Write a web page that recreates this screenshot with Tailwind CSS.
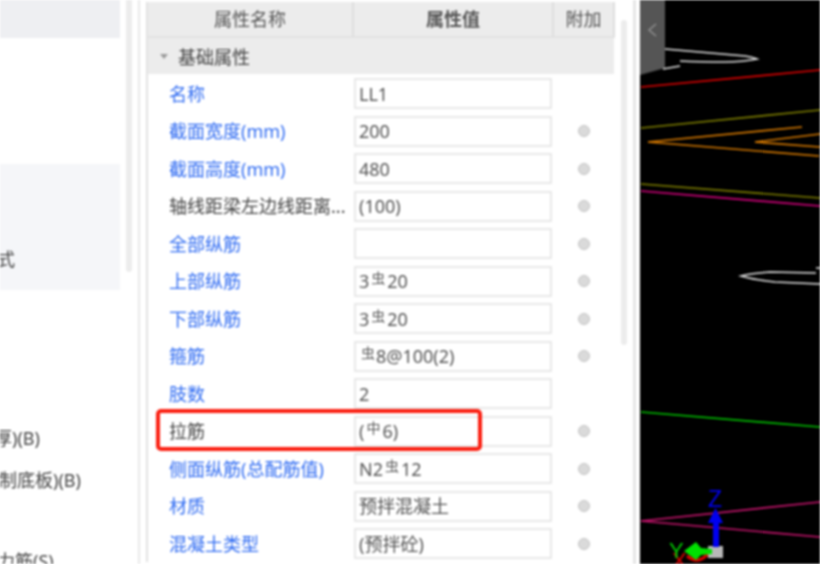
<!DOCTYPE html>
<html lang="zh">
<head>
<meta charset="utf-8">
<script src="https://cdn.jsdelivr.net/npm/@tailwindcss/browser@4"></script>
</head>
<body class="m-0 overflow-hidden bg-white">
<div class="relative flex h-[564px] w-[820px] overflow-hidden bg-white font-['Noto_Sans','Noto_Sans_CJK_SC',sans-serif] text-[18px] leading-[24px] text-[#444] blur-[0.8px]">

  <!-- left panel -->
  <aside class="relative h-full w-[140px] shrink-0 border-r-2 border-[#e8e8e8]">
    <div class="flex h-full w-[120px] flex-col">
      <div class="h-[38px] shrink-0 bg-[#eeeff2]"></div>
      <div class="h-[126px] shrink-0"></div>
      <div class="flex h-[126px] shrink-0 items-end bg-[#f5f6f9] pb-[19px]"><span class="-ml-[3px]">式</span></div>
      <div class="flex flex-1 flex-col items-start whitespace-nowrap">
        <span class="-ml-[6px] mt-[136px]">厚)(B)</span>
        <span class="-ml-[1px] mt-[18px]">制底板)(B)</span>
        <span class="-ml-[3px] mt-[57px]">力筋(S)</span>
      </div>
    </div>
    <div class="absolute left-[126px] top-0 h-[272px] w-[6px] rounded-b-[3px] bg-[#ececec]"></div>
  </aside>

  <!-- property panel -->
  <section class="relative h-full w-[500px] shrink-0 pl-[6px]">
    <div class="w-[469px] border-l-2 border-[#e2e2e2]">
      <div class="mt-[2px] flex h-[36px] border-b-2 border-[#e2e2e2] bg-[#ececec] text-[#555]">
        <div class="flex w-[206px] items-center justify-center border-r-2 border-[#dedede]">属性名称</div>
        <div class="flex w-[200px] items-center justify-center border-r-2 border-[#dedede] font-bold">属性值</div>
        <div class="flex flex-1 items-center justify-center border-r-2 border-[#dedede]">附加</div>
      </div>
      <div class="flex h-[36px] w-[466px] items-center bg-[#ececec] pt-[1px] text-[#444]">
        <span class="ml-[12px] mr-[10px] h-0 w-0 border-x-[4px] border-t-[5px] border-x-transparent border-t-[#999]"></span>基础属性
      </div>

      <div class="text-[#2f6bf2]">
        <div class="flex h-[37.5px] items-center pt-[2px]"><div class="w-[206px] truncate pl-[21px]">名称</div><div class="flex h-[31px] w-[198px] items-center border-2 border-[#e8e8e8] pl-[3px] text-[#555]">LL1</div><div class="flex-1"></div></div>
        <div class="flex h-[37.5px] items-center pt-[2px]"><div class="w-[206px] truncate pl-[21px]">截面宽度(mm)</div><div class="flex h-[31px] w-[198px] items-center border-2 border-[#e8e8e8] pl-[3px] text-[#555]">200</div><div class="flex flex-1 justify-center"><span class="size-[12px] rounded-full border border-[#c4c4c4] bg-[#dadada]"></span></div></div>
        <div class="flex h-[37.5px] items-center pt-[2px]"><div class="w-[206px] truncate pl-[21px]">截面高度(mm)</div><div class="flex h-[31px] w-[198px] items-center border-2 border-[#e8e8e8] pl-[3px] text-[#555]">480</div><div class="flex flex-1 justify-center"><span class="size-[12px] rounded-full border border-[#c4c4c4] bg-[#dadada]"></span></div></div>
        <div class="flex h-[37.5px] items-center pt-[2px]"><div class="w-[206px] whitespace-nowrap pl-[21px] text-[#444]">轴线距梁左边线距离...</div><div class="flex h-[31px] w-[198px] items-center border-2 border-[#e8e8e8] pl-[3px] text-[#555]">(100)</div><div class="flex flex-1 justify-center"><span class="size-[12px] rounded-full border border-[#c4c4c4] bg-[#dadada]"></span></div></div>
        <div class="flex h-[37.5px] items-center pt-[2px]"><div class="w-[206px] truncate pl-[21px]">全部纵筋</div><div class="flex h-[31px] w-[198px] items-center border-2 border-[#e8e8e8] pl-[3px] text-[#555]"></div><div class="flex flex-1 justify-center"><span class="size-[12px] rounded-full border border-[#c4c4c4] bg-[#dadada]"></span></div></div>
        <div class="flex h-[37.5px] items-center pt-[2px]"><div class="w-[206px] truncate pl-[21px]">上部纵筋</div><div class="flex h-[31px] w-[198px] items-center border-2 border-[#e8e8e8] pl-[3px] text-[#555]">3<span class="mx-[2px] -translate-y-[3px] text-[14px]">虫</span>20</div><div class="flex flex-1 justify-center"><span class="size-[12px] rounded-full border border-[#c4c4c4] bg-[#dadada]"></span></div></div>
        <div class="flex h-[37.5px] items-center pt-[2px]"><div class="w-[206px] truncate pl-[21px]">下部纵筋</div><div class="flex h-[31px] w-[198px] items-center border-2 border-[#e8e8e8] pl-[3px] text-[#555]">3<span class="mx-[2px] -translate-y-[3px] text-[14px]">虫</span>20</div><div class="flex flex-1 justify-center"><span class="size-[12px] rounded-full border border-[#c4c4c4] bg-[#dadada]"></span></div></div>
        <div class="flex h-[37.5px] items-center pt-[2px]"><div class="w-[206px] truncate pl-[21px]">箍筋</div><div class="flex h-[31px] w-[198px] items-center border-2 border-[#e8e8e8] pl-[3px] text-[#555]"><span class="ml-[2px] mr-[1px] -translate-y-[3px] text-[14px]">虫</span>8@100(2)</div><div class="flex flex-1 justify-center"><span class="size-[12px] rounded-full border border-[#c4c4c4] bg-[#dadada]"></span></div></div>
        <div class="flex h-[37.5px] items-center pt-[2px]"><div class="w-[206px] truncate pl-[21px]">肢数</div><div class="flex h-[31px] w-[198px] items-center border-2 border-[#e8e8e8] pl-[3px] text-[#555]">2</div><div class="flex-1"></div></div>
        <div class="flex h-[37.5px] items-center pt-[2px]"><div class="w-[206px] truncate pl-[21px] text-[#444]">拉筋</div><div class="flex h-[31px] w-[198px] items-center border-2 border-[#e8e8e8] pl-[3px] text-[#555]">(<span class="mx-[2px] -translate-y-[3px] text-[14px]">中</span>6)</div><div class="flex flex-1 justify-center"><span class="size-[12px] rounded-full border border-[#c4c4c4] bg-[#dadada]"></span></div></div>
        <div class="flex h-[37.5px] items-center pt-[2px]"><div class="w-[206px] truncate pl-[21px]">侧面纵筋(总配筋值)</div><div class="flex h-[31px] w-[198px] items-center border-2 border-[#e8e8e8] pl-[3px] text-[#555]">N2<span class="mx-[2px] -translate-y-[3px] text-[14px]">虫</span>12</div><div class="flex flex-1 justify-center"><span class="size-[12px] rounded-full border border-[#c4c4c4] bg-[#dadada]"></span></div></div>
        <div class="flex h-[37.5px] items-center pt-[2px]"><div class="w-[206px] truncate pl-[21px]">材质</div><div class="flex h-[31px] w-[198px] items-center border-2 border-[#e8e8e8] pl-[3px] text-[#555]">预拌混凝土</div><div class="flex flex-1 justify-center"><span class="size-[12px] rounded-full border border-[#c4c4c4] bg-[#dadada]"></span></div></div>
        <div class="flex h-[37.5px] items-center pt-[2px]"><div class="w-[206px] truncate pl-[21px]">混凝土类型</div><div class="flex h-[31px] w-[198px] items-center border-2 border-[#e8e8e8] pl-[3px] text-[#555]">(预拌砼)</div><div class="flex flex-1 justify-center"><span class="size-[12px] rounded-full border border-[#c4c4c4] bg-[#dadada]"></span></div></div>
      </div>
    </div>

    <!-- panel scrollbar -->
    <div class="absolute left-[481px] top-[20px] h-[325px] w-[6px] rounded-[3px] bg-[#ececec]"></div>
    <div class="absolute left-[493px] top-0 h-full w-[3px] bg-[#e6e6e6]"></div>
  </section>

  <!-- black 3D viewport -->
  <main class="relative h-full flex-1 bg-black">
    <svg class="absolute inset-0" width="180" height="564" viewBox="640 0 180 564" fill="none">
      <polygon points="640,0 665,0 665,68 640,75" fill="#555555"/>
      <path d="M656 24 L649 30 L656 36" stroke="#8f8f8f" stroke-width="1.6"/>
      <g stroke="#e6e6e6" stroke-width="1.6">
        <path d="M665 49 L745 56 Q752 57 757 59 Q742 62 725 62 Q700 62 680 61"/>
        <path d="M663 69 L680 66"/>
        <path d="M820 268 L816 268 M816 273 L770 272 Q752 273 741 276 Q755 280 775 282 L820 284"/>
      </g>
      <path d="M641 87 L820 70" stroke="#e00000" stroke-width="1.7"/>
      <path d="M641 128 L820 110" stroke="#7e7e00" stroke-width="1.7"/>
      <path d="M641 184 L820 198" stroke="#7e7e00" stroke-width="1.7"/>
      <path d="M641 191 L820 206" stroke="#d6007e" stroke-width="1.7"/>
      <path d="M802 127 L648 142 L819 156" stroke="#d87a00" stroke-width="1.7"/>
      <path d="M820 134 L755 142 L820 147" stroke="#d87a00" stroke-width="1.7"/>
      <path d="M641 412 L820 427" stroke="#00c000" stroke-width="1.7"/>
      <path d="M820 502 L641 521 L820 537" stroke="#c8146e" stroke-width="1.7"/>

      <text x="672" y="568" font-family="Liberation Sans" font-size="22" fill="#e00000">X</text>
      <path d="M687 556 Q698 565 708 554" stroke="#e00000" stroke-width="3"/>
      <rect x="708" y="546" width="15" height="12" fill="#b8b8b8"/>
      <rect x="713" y="520" width="6" height="27" fill="#0000f0"/>
      <polygon points="715.5,508 708,523 723,523" fill="#0000f0"/>
      <polygon points="684,551 696,542 701,548 712,549 712,554 701,555 696,560" fill="#00e000"/>
      <text x="708" y="507" font-family="Liberation Sans" font-size="23" fill="#0000f0">Z</text>
      <text x="669" y="558" font-family="Liberation Sans" font-size="22" fill="#00d000">Y</text>
    </svg>
  </main>

  <!-- red annotation -->
  <div class="absolute left-[156px] top-[409px] h-[42px] w-[326px] rounded-[5px] border-[4px] border-[#fb1e10]"></div>
</div>
</body>
</html>
